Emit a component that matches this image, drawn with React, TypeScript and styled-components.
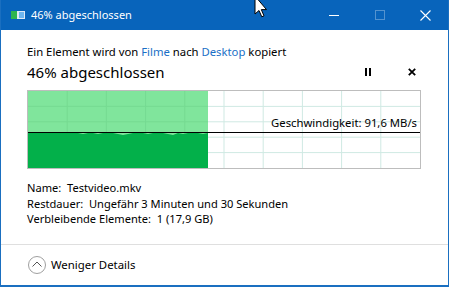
import React from "react";
import styled, { createGlobalStyle } from "styled-components";

const GlobalStyle = createGlobalStyle`
  html, body {
    margin: 0;
    padding: 0;
    background: #ffffff;
  }
  body {
    font-family: "Segoe UI", "Noto Sans", sans-serif;
    color: #000;
  }
`;

const GRAPH_W = 392;
const GRAPH_H = 77;
const PROGRESS = 0.46;
const LINE_Y = 41;

// small wobble on top of the throughput area
const wobble = [0, 0, 0, 0, 0, 0, 0, 0, -1, 0, 0, 1, 0, 0, 1, 0, 0, 0, 1, 2, 1, 0, 0, 0, 1, 0, 0, 0, 1, 2, 0, 1, 0, 0, 0, 1, 0];

interface Props {
  percent: number;
}

const CopyDialog = (props: Props) => {
  const fillW = Math.round(GRAPH_W * PROGRESS);
  const step = fillW / (wobble.length - 1);
  const top = wobble
    .map((d, i) => `${(i * step).toFixed(1)},${LINE_Y + 1 + d}`)
    .join(" L ");

  const cols = Array.from({ length: 9 }, (_, i) => ((i + 1) * GRAPH_W) / 10);
  const rows = Array.from({ length: 4 }, (_, i) => ((i + 1) * GRAPH_H) / 5);

  return (
    <Window>
      <TitleBar>
        <AppIcon>
          <svg width="14" height="10" viewBox="0 0 14 10">
            <rect x="0" y="1" width="14" height="8" fill="#dfe9f5" />
            <rect x="0" y="1" width="6" height="8" fill="#2fb44f" />
            <rect x="8" y="2" width="5" height="6" fill="#6fb6ef" />
          </svg>
        </AppIcon>
        <TitleText>{props.percent}% abgeschlossen</TitleText>
        <CaptionButtons>
          <CaptionButton>
            <svg width="10" height="10" viewBox="0 0 10 10">
              <line x1="0" y1="5.5" x2="10" y2="5.5" stroke="#fff" strokeWidth="1" />
            </svg>
          </CaptionButton>
          <CaptionButton disabled>
            <svg width="10" height="10" viewBox="0 0 10 10">
              <rect x="0.5" y="0.5" width="9" height="9" fill="none" stroke="#fff" strokeWidth="1" />
            </svg>
          </CaptionButton>
          <CaptionButton>
            <svg width="11" height="11" viewBox="0 0 11 11">
              <path d="M0.5 0.5 L10.5 10.5 M10.5 0.5 L0.5 10.5" stroke="#fff" strokeWidth="1.1" />
            </svg>
          </CaptionButton>
        </CaptionButtons>
      </TitleBar>

      <Body>
        <Summary>
          Ein Element wird von <LinkText>Filme</LinkText> nach{" "}
          <LinkText>Desktop</LinkText> kopiert
        </Summary>
        <HeadingRow>
          <Heading>{props.percent}% abgeschlossen</Heading>
          <Controls>
            <IconButton title="Anhalten">
              <svg width="6" height="8" viewBox="0 0 6 8">
                <rect x="0" y="0" width="2" height="8" fill="#000" />
                <rect x="4" y="0" width="2" height="8" fill="#000" />
              </svg>
            </IconButton>
            <IconButton title="Abbrechen">
              <svg width="8" height="8" viewBox="0 0 8 8">
                <path d="M0.8 0.8 L7.2 7.2 M7.2 0.8 L0.8 7.2" stroke="#000" strokeWidth="1.8" />
              </svg>
            </IconButton>
          </Controls>
        </HeadingRow>

        <Graph>
          <svg width={GRAPH_W} height={GRAPH_H} viewBox={`0 0 ${GRAPH_W} ${GRAPH_H}`}>
            {cols.map((x) => (
              <line key={"c" + x} x1={x} y1={0} x2={x} y2={GRAPH_H} stroke="#cfe9e3" strokeWidth="1" />
            ))}
            {rows.map((y) => (
              <line key={"r" + y} x1={0} y1={y} x2={GRAPH_W} y2={y} stroke="#cfe9e3" strokeWidth="1" />
            ))}
            <rect x="0" y="0" width={fillW} height={GRAPH_H} fill="#80e59c" />
            {cols
              .filter((x) => x < fillW)
              .map((x) => (
                <line key={"g" + x} x1={x} y1={0} x2={x} y2={GRAPH_H} stroke="#76da92" strokeWidth="1" />
              ))}
            {rows.map((y) => (
              <line key={"h" + y} x1={0} y1={y} x2={fillW} y2={y} stroke="#76da92" strokeWidth="1" />
            ))}
            <path d={`M 0,${GRAPH_H} L ${top} L ${fillW},${GRAPH_H} Z`} fill="#03b04a" />
            <line x1="0" y1={LINE_Y + 0.5} x2={GRAPH_W} y2={LINE_Y + 0.5} stroke="#000" strokeWidth="1" />
          </svg>
          <SpeedLabel>Geschwindigkeit: 91,6 MB/s</SpeedLabel>
        </Graph>

        <Details>
          <DetailLine>Name:&nbsp; Testvideo.mkv</DetailLine>
          <DetailLine>Restdauer:&nbsp; Ungefähr 3 Minuten und 30 Sekunden</DetailLine>
          <DetailLine>Verbleibende Elemente:&nbsp; 1 (17,9 GB)</DetailLine>
        </Details>
      </Body>

      <Footer>
        <ToggleCircle>
          <svg width="10" height="6" viewBox="0 0 10 6">
            <path d="M0.5 5.5 L5 1 L9.5 5.5" fill="none" stroke="#555" strokeWidth="1" />
          </svg>
        </ToggleCircle>
        <FooterText>Weniger Details</FooterText>
      </Footer>

      <Cursor>
        <svg width="14" height="20" viewBox="0 0 14 20">
          <path
            d="M1 -4 L1 14 L5 10.5 L7.8 16.8 L10 15.8 L7.3 9.6 L12.5 9.6 Z"
            fill="#fff"
            stroke="#000"
            strokeWidth="1"
            strokeLinejoin="round"
          />
        </svg>
      </Cursor>
    </Window>
  );
};

const App = () => (
  <>
    <GlobalStyle />
    <CopyDialog percent={46} />
  </>
);

export default App;

const Window = styled.div`
  position: relative;
  width: 449px;
  height: 287px;
  box-sizing: border-box;
  border-left: 1px solid #1a6fc0;
  border-right: 1px solid #1a6fc0;
  border-bottom: 2px solid #1a6fc0;
  display: flex;
  flex-direction: column;
  background: #ffffff;
  overflow: hidden;
`;

const TitleBar = styled.div`
  height: 30px;
  flex: none;
  background: #0864bb;
  display: flex;
  align-items: center;
  color: #fff;
`;

const AppIcon = styled.div`
  width: 14px;
  height: 10px;
  margin-left: 10px;
  margin-right: 6px;
  display: flex;
`;

const TitleText = styled.div`
  font-size: 11px;
  line-height: 16px;
  flex: 1;
`;

const CaptionButtons = styled.div`
  display: flex;
  height: 100%;
`;

const CaptionButton = styled.div<{ disabled?: boolean }>`
  width: 45.5px;
  height: 100%;
  display: flex;
  align-items: center;
  justify-content: center;
  opacity: ${(p) => (p.disabled ? 0.3 : 1)};
`;

const Body = styled.div`
  padding: 14px 26px 0 26px;
  display: flex;
  flex-direction: column;
`;

const Summary = styled.div`
  font-size: 11.3px;
  line-height: 16px;
`;

const LinkText = styled.span`
  color: #1a6fc6;
`;

const HeadingRow = styled.div`
  margin-top: 2px;
  display: flex;
  align-items: center;
  justify-content: space-between;
  height: 20px;
`;

const Heading = styled.div`
  font-size: 15px;
  line-height: 20px;
`;

const Controls = styled.div`
  display: flex;
  align-items: center;
  gap: 32px;
  margin-right: 4px;
`;

const IconButton = styled.div`
  width: 12px;
  height: 12px;
  display: flex;
  align-items: center;
  justify-content: center;
`;

const Graph = styled.div`
  position: relative;
  margin-top: 8px;
  width: 392px;
  height: 77px;
  border: 1px solid #bdbdbd;
  svg {
    display: block;
  }
`;

const SpeedLabel = styled.div`
  position: absolute;
  right: 3px;
  top: 25px;
  font-size: 11.3px;
  line-height: 14px;
`;

const Details = styled.div`
  margin-top: 11px;
  display: flex;
  flex-direction: column;
`;

const DetailLine = styled.div`
  font-size: 11.1px;
  line-height: 15.5px;
  white-space: nowrap;
`;

const Footer = styled.div`
  margin-top: auto;
  height: 41px;
  border-top: 1px solid #dfdfdf;
  display: flex;
  align-items: center;
  padding-left: 27px;
  padding-bottom: 1px;
  box-sizing: border-box;
`;

const ToggleCircle = styled.div`
  width: 18px;
  height: 18px;
  border: 1px solid #a0a0a0;
  border-radius: 50%;
  display: flex;
  align-items: center;
  justify-content: center;
  margin-right: 5px;
  padding-bottom: 2px;
  box-sizing: border-box;
`;

const FooterText = styled.div`
  font-size: 11.4px;
  line-height: 16px;
`;

const Cursor = styled.div`
  position: absolute;
  left: 253px;
  top: 0;
  pointer-events: none;
`;
